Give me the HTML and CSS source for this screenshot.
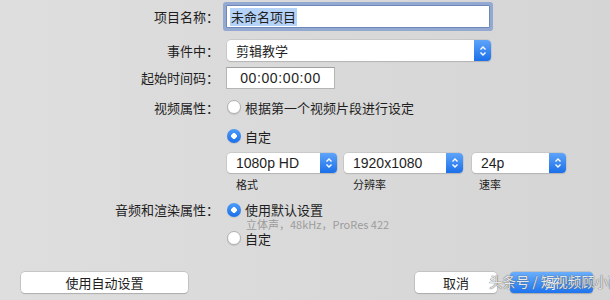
FILE: index.html
```html
<!DOCTYPE html>
<html lang="zh">
<head>
    <meta charset="utf-8">
    <title>项目设置</title>
    <link rel="stylesheet" href="styles.css">
</head>
<body>
<div class="sheet">

    <div class="row r-name">
        <span class="lbl">项目名称：</span>
        <div class="field name"><span class="sel">未命名项目</span></div>
    </div>

    <div class="row r-event">
        <span class="lbl">事件中：</span>
        <div class="popup event">
            <span class="val">剪辑教学</span>
            <span class="stepper"><svg width="8" height="12" viewBox="0 0 8 12"><path d="M1.5 4.5 L4 2 L6.5 4.5 M1.5 7.5 L4 10 L6.5 7.5" fill="none" stroke="#fff" stroke-width="1.4"/></svg></span>
        </div>
    </div>

    <div class="row r-tc">
        <span class="lbl">起始时间码：</span>
        <div class="field tc">00:00:00:00</div>
    </div>

    <div class="row r-video">
        <span class="lbl">视频属性：</span>
        <span class="radio"></span>
        <span class="opt">根据第一个视频片段进行设定</span>
    </div>

    <div class="row r-custom">
        <span class="lbl"></span>
        <span class="radio on"></span>
        <span class="opt">自定</span>
    </div>

    <div class="row r-formats">
        <span class="lbl"></span>
        <div class="formats">
            <div class="fmt f-format">
                <div class="popup">
                    <span class="val">1080p HD</span>
                    <span class="stepper"><svg width="8" height="12" viewBox="0 0 8 12"><path d="M1.5 4.5 L4 2 L6.5 4.5 M1.5 7.5 L4 10 L6.5 7.5" fill="none" stroke="#fff" stroke-width="1.4"/></svg></span>
                </div>
                <span class="cap">格式</span>
            </div>
            <div class="fmt f-res">
                <div class="popup">
                    <span class="val">1920x1080</span>
                    <span class="stepper"><svg width="8" height="12" viewBox="0 0 8 12"><path d="M1.5 4.5 L4 2 L6.5 4.5 M1.5 7.5 L4 10 L6.5 7.5" fill="none" stroke="#fff" stroke-width="1.4"/></svg></span>
                </div>
                <span class="cap">分辨率</span>
            </div>
            <div class="fmt f-rate">
                <div class="popup">
                    <span class="val">24p</span>
                    <span class="stepper"><svg width="8" height="12" viewBox="0 0 8 12"><path d="M1.5 4.5 L4 2 L6.5 4.5 M1.5 7.5 L4 10 L6.5 7.5" fill="none" stroke="#fff" stroke-width="1.4"/></svg></span>
                </div>
                <span class="cap">速率</span>
            </div>
        </div>
    </div>

    <div class="row r-audio">
        <span class="lbl">音频和渲染属性：</span>
        <div class="audio">
            <div class="aline first"><span class="radio on"></span><span class="opt">使用默认设置</span></div>
            <div class="sub">立体声，48kHz，ProRes 422</div>
            <div class="aline"><span class="radio"></span><span class="opt">自定</span></div>
        </div>
    </div>

    <div class="buttons">
        <button type="button" class="btn auto">使用自动设置</button>
        <span class="spacer"></span>
        <button type="button" class="btn cancel">取消</button>
        <button type="button" class="btn ok">好</button>
    </div>

    <div class="watermark">头条号 / 短视频顾小雨</div>
</div>
</body>
</html>
```

FILE: styles.css
```css
html, body {
    margin: 0;
    height: 100%;
    overflow: hidden;
}

body {
    background: linear-gradient(to right, #dedede, #d5d5d5);
    font: 13px/1 "Noto Sans CJK SC", "Liberation Sans", sans-serif;
    color: #1e1e1e;
}

.sheet {
    position: relative;
    height: 300px;
    padding-top: 2px;
    box-sizing: border-box;
}

.row {
    display: flex;
    align-items: center;
}

.lbl {
    width: 219px;
    flex: none;
    text-align: right;
    margin-right: 7px;
}

.r-name    { height: 29px; }
.r-event   { height: 21px; margin-top: 9px; }
.r-tc      { height: 21px; margin-top: 6px; }
.r-video   { height: 18px; margin-top: 10px; }
.r-custom  { height: 18px; margin-top: 11px; }
.r-formats { margin-top: 8px; align-items: flex-start; }
.r-audio   { margin-top: 8px; align-items: flex-start; }
.r-audio .lbl { line-height: 17px; }

/* text fields */
.field {
    background: #fff;
    box-sizing: border-box;
    border: 1px solid #b5b5b5;
    border-top-color: #a0a0a0;
    height: 22px;
    display: flex;
    align-items: center;
}

.field.name {
    width: 264px;
    height: 23px;
    padding-left: 3px;
    border-color: #6d87b8;
    box-shadow: 0 0 0 3px #93a9d2;
    border-radius: 1px;
}

.sel {
    background: #b5d3f8;
    padding: 2px 1px;
    line-height: 14px;
}

.field.tc {
    width: 109px;
    justify-content: center;
    font-family: "Liberation Sans", sans-serif;
    font-size: 14px;
    letter-spacing: 0.6px;
}

/* popups */
.popup {
    display: flex;
    align-items: center;
    height: 20px;
    background: #fff;
    border-radius: 4px;
    box-shadow: 0 0 0 0.5px #b9b9b9, 0 1px 1px rgba(0,0,0,0.18);
    overflow: hidden;
    box-sizing: border-box;
}

.popup.event {
    width: 264px;
    height: 21px;
    margin-left: 1px;
}

.popup .val {
    flex: 1;
    padding-left: 9px;
    font-family: "Liberation Sans", "Noto Sans CJK SC", sans-serif;
    font-size: 14px;
}

.popup.event .val {
    font-family: "Noto Sans CJK SC", sans-serif;
    font-size: 13px;
}

.stepper {
    width: 17px;
    align-self: stretch;
    display: flex;
    align-items: center;
    justify-content: center;
    background: linear-gradient(#5ea4fa, #1b6fe8);
}

/* radios */
.radio {
    width: 14px;
    height: 14px;
    flex: none;
    box-sizing: border-box;
    border-radius: 50%;
    background: #fff;
    border: 1px solid #b0b0b0;
    margin-left: 1px;
    margin-right: 4px;
    box-shadow: 0 1px 1px rgba(0,0,0,0.1);
}

.radio.on {
    border: none;
    background: radial-gradient(circle, #fff 0 2.6px, transparent 3px), linear-gradient(#4e9bf9, #1b70ea);
}

/* format popups */
.formats {
    display: flex;
}

.fmt {
    display: flex;
    flex-direction: column;
}

.f-format { width: 110px; margin-left: 1px; }
.f-res    { width: 119px; margin-left: 7px; }
.f-rate   { width: 94px; margin-left: 9px; }

.cap {
    font-size: 11px;
    line-height: 18px;
    margin-top: 2px;
    padding-left: 9px;
}

.f-rate .cap { padding-left: 7px; }

/* audio options */
.audio {
    display: flex;
    flex-direction: column;
}

.aline {
    display: flex;
    align-items: center;
    height: 16px;
}

.aline.first { height: 17px; }

.sub {
    height: 12px;
    line-height: 12px;
    margin-left: 20px;
    font-size: 11px;
    color: #9c9c9c;
}

/* bottom buttons */
.buttons {
    display: flex;
    margin-top: 26px;
    padding: 0 17px 0 21px;
}

.spacer { flex: 1; }

.btn {
    height: 21px;
    box-sizing: border-box;
    border: none;
    border-radius: 4px;
    background: #fff;
    box-shadow: 0 0 0 0.5px #adadad, 0 1px 1px rgba(0,0,0,0.2);
    font: 13px/1 "Noto Sans CJK SC", sans-serif;
    color: #1e1e1e;
    padding: 0;
}

.btn.auto   { width: 167px; }
.btn.cancel { width: 82px; }
.btn.ok {
    width: 83px;
    margin-left: 13px;
    color: #fff;
    background: linear-gradient(#6aaefc, #1d74ee);
}

.watermark {
    position: absolute;
    left: 489px;
    top: 275px;
    font-size: 13.5px;
    color: rgba(255,255,255,0.85);
    text-shadow: 0 0 1px #666, 0 0 1px #666;
    white-space: nowrap;
}
```
